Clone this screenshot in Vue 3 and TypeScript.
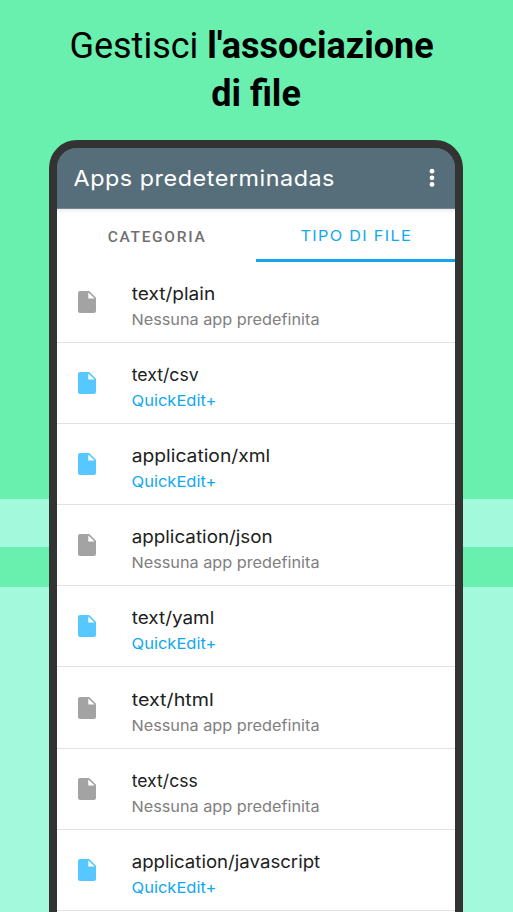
<script setup lang="ts">
interface FileType {
  mime: string
  width: number
  assigned: boolean
}

const fileTypes: FileType[] = [
  { mime: 'text/plain', width: 83.5, assigned: false },
  { mime: 'text/csv', width: 67, assigned: true },
  { mime: 'application/xml', width: 138.5, assigned: true },
  { mime: 'application/json', width: 141, assigned: false },
  { mime: 'text/yaml', width: 82.5, assigned: true },
  { mime: 'text/html', width: 82, assigned: false },
  { mime: 'text/css', width: 66, assigned: false },
  { mime: 'application/javascript', width: 188.5, assigned: true },
]
</script>

<template>
  <main class="page">
    <h1 class="headline">
      <span class="line">Gestisci <b>l'associazione</b>&nbsp;</span>
      <b class="line">di file</b>
    </h1>
    <section class="phone">
      <header class="bar">
        <svg class="bar-title" width="280" height="60">
          <text x="-0.5" y="38" textLength="261.5" lengthAdjust="spacingAndGlyphs">Apps predeterminadas</text>
        </svg>
        <svg class="more" width="6" height="20" viewBox="0 0 6 20">
          <circle cx="3" cy="3.2" r="2.4" />
          <circle cx="3" cy="9.8" r="2.4" />
          <circle cx="3" cy="16.4" r="2.4" />
        </svg>
      </header>
      <nav class="tabs">
        <div class="tab">
          <svg width="198" height="50"><text x="50.7" y="32.5" textLength="97">CATEGORIA</text></svg>
        </div>
        <div class="tab active">
          <svg width="198" height="50"><text x="44.5" y="32.3" textLength="111.5" lengthAdjust="spacingAndGlyphs">TIPO DI FILE</text></svg>
        </div>
      </nav>
      <ul class="list">
        <li v-for="item in fileTypes" :key="item.mime" class="row" :class="{ assigned: item.assigned }">
          <svg class="file" width="18" height="22" viewBox="0 0 18 22">
            <path d="M2 0H11.2L18 6.8V20Q18 22 16 22H2Q0 22 0 20V2Q0 0 2 0ZM10.3 1.4V7.6H16.6Z" fill-rule="evenodd" />
          </svg>
          <svg class="labels" width="260" height="70">
            <text class="mime" x="-0.3" y="32.8" :textLength="item.width" lengthAdjust="spacingAndGlyphs">{{ item.mime }}</text>
            <text class="app" x="-0.5" y="57.6" :textLength="item.assigned ? 85 : 188" lengthAdjust="spacingAndGlyphs">{{ item.assigned ? 'QuickEdit+' : 'Nessuna app predefinita' }}</text>
          </svg>
        </li>
      </ul>
    </section>
  </main>
</template>

<style>
body {
  margin: 0;
  overflow: hidden;
}
</style>

<style scoped>
.page {
  box-sizing: border-box;
  width: 513px;
  height: 912px;
  padding-top: 22px;
  overflow: hidden;
  background: linear-gradient(#69f0ae 0 499px, #a3f9dc 499px 547px, #69f0ae 547px 587px, #a3f9dc 587px);
}
.headline {
  box-sizing: border-box;
  height: 118px;
  margin: 0;
  padding-right: 1px;
  color: #000;
  font: 400 36px/48px Roboto, sans-serif;
  text-align: center;
}
.line {
  display: block;
}
b {
  font-weight: 700;
}
.phone {
  box-sizing: border-box;
  width: 414px;
  height: 900px;
  margin-left: 49px;
  overflow: hidden;
  border: 8px solid #333;
  border-radius: 28px;
  background: linear-gradient(#566e7a 0 40px, #fff 40px);
}
svg {
  display: block;
  flex: none;
}
.bar {
  display: flex;
  align-items: center;
  justify-content: space-between;
  box-sizing: border-box;
  height: 61px;
  padding: 0 20.5px 0 17px;
  border-bottom: 1px solid #738790;
  background: #566e7a;
}
.bar-title text {
  fill: #fff;
  font: 370 22px Inter, sans-serif;
  letter-spacing: 0.5px;
}
.more {
  fill: #fff;
}
.tabs {
  display: flex;
  height: 53px;
  background: linear-gradient(#ececec, #fff 4px);
}
.tab {
  box-sizing: border-box;
  width: 199px;
  height: 53px;
}
.tab text {
  fill: #707070;
  font: 500 15.5px Roboto, sans-serif;
}
.tab.active {
  background: linear-gradient(transparent 50.5px, #12a8ef 50.5px);
}
.tab.active text {
  fill: #12a8ef;
  font: 400 15px Inter, sans-serif;
  letter-spacing: 1.2px;
}
.list {
  margin: 0;
  padding: 0;
  list-style: none;
}
.row {
  display: flex;
  align-items: center;
  gap: 36px;
  box-sizing: border-box;
  height: 81.1px;
  padding-left: 21px;
  border-bottom: 1px solid #e2e2e2;
}
.file {
  fill: #a3a3a3;
}
.mime {
  fill: #212121;
  font: 380 17.5px Inter, sans-serif;
}
.app {
  fill: #808080;
  font: 400 15px Inter, sans-serif;
}
.assigned .file {
  fill: #57c8ff;
}
.assigned .app {
  fill: #12a8ef;
}
</style>
